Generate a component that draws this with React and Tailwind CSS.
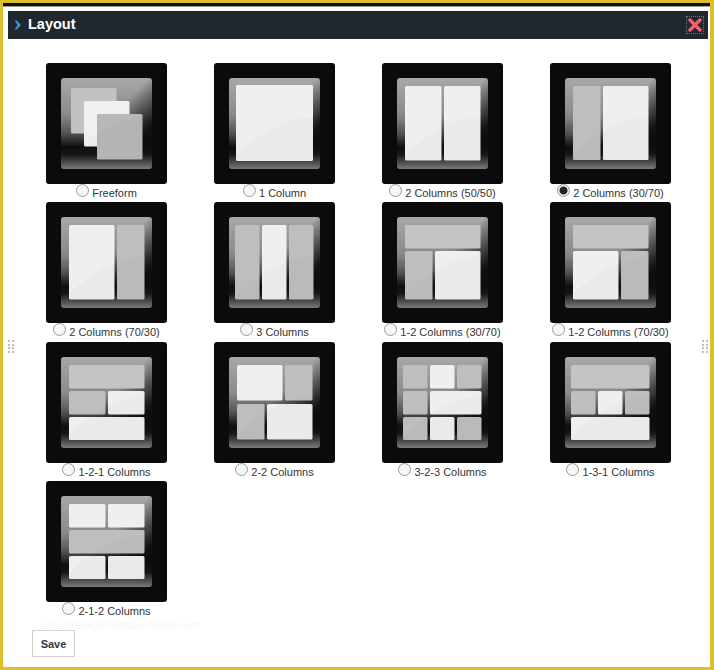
import React, { useId } from 'react';

const L = '#efefef';
const G = '#bebebe';
const T = '#c4c4c4';

// blocks are [x, y, w, h, fill] inside a 121x121 tile
const LAYOUTS = [
  { label: 'Freeform', blocks: [[25, 25, 45.5, 45.5, '#c2c2c2'], [38, 38, 45.5, 45.5, '#f0f0f0'], [51, 51, 45.5, 45.5, '#b8b8b8']] },
  { label: '1 Column', blocks: [[22, 22, 77, 76, L]] },
  { label: '2 Columns (50/50)', blocks: [[23, 23, 36.5, 74.5, L], [62, 23, 36.5, 74.5, L]] },
  { label: '2 Columns (30/70)', checked: true, blocks: [[23, 23, 27.5, 74, G], [53, 23, 45.5, 74, L]] },
  { label: '2 Columns (70/30)', blocks: [[23, 23, 45.5, 74.5, L], [71, 23, 27.5, 74.5, G]] },
  { label: '3 Columns', blocks: [[21, 23, 24.5, 74.5, G], [48, 23, 24.5, 74.5, L], [75, 23, 24.5, 74.5, G]] },
  { label: '1-2 Columns (30/70)', blocks: [[23, 23, 75.5, 23.5, T], [23, 49, 27.5, 48.5, G], [53, 49, 45.5, 48.5, L]] },
  { label: '1-2 Columns (70/30)', blocks: [[23, 23, 75.5, 23.5, T], [23, 49, 45.5, 48.5, L], [71, 49, 27.5, 48.5, G]] },
  { label: '1-2-1 Columns', blocks: [[23, 23, 75.5, 23.5, T], [23, 49, 36.5, 23.5, G], [62, 49, 36.5, 23.5, L], [23, 75, 75.5, 23, L]] },
  { label: '2-2 Columns', blocks: [[23, 23, 45.5, 35.5, L], [71, 23, 27.5, 35.5, G], [23, 62, 27.5, 35.5, G], [53, 62, 45.5, 35.5, L]] },
  { label: '3-2-3 Columns', blocks: [[21, 23, 24.5, 23.5, G], [48, 23, 24.5, 23.5, L], [75, 23, 24.5, 23.5, G], [21, 49, 24.5, 23.5, G], [48, 49, 51.5, 23.5, L], [21, 75, 24.5, 23, G], [48, 75, 24.5, 23, L], [75, 75, 24.5, 23, G]] },
  { label: '1-3-1 Columns', blocks: [[21, 23, 78.5, 23.5, T], [21, 49, 24.5, 23.5, G], [48, 49, 24.5, 23.5, L], [75, 49, 24.5, 23.5, G], [21, 75, 78.5, 23, L]] },
  { label: '2-1-2 Columns', blocks: [[23, 23, 36.5, 23.5, L], [62, 23, 36.5, 23.5, L], [23, 49, 75.5, 23.5, G], [23, 75, 36.5, 23, L], [62, 75, 36.5, 23, L]] },
];

function LayoutIcon({ blocks }) {
  const id = useId();
  return (
    <svg width="121" height="121" viewBox="0 0 121 121" className="block">
      <defs>
        <linearGradient id={`${id}p`} x1="0" y1="0" x2="0" y2="1">
          <stop offset="0" stopColor="#a8a8a8" />
          <stop offset="0.4" stopColor="#8a8a8a" />
          <stop offset="0.6" stopColor="#565656" />
          <stop offset="0.76" stopColor="#0e0e0e" />
          <stop offset="0.84" stopColor="#161616" />
          <stop offset="1" stopColor="#7a7a7a" />
        </linearGradient>
        <linearGradient id={`${id}d`} gradientUnits="userSpaceOnUse" x1="60" y1="30" x2="100" y2="70">
          <stop offset="0.35" stopColor="#0c0c0c" stopOpacity="0" />
          <stop offset="1" stopColor="#0c0c0c" stopOpacity="0.95" />
        </linearGradient>
        <clipPath id={`${id}c`}>
          {blocks.map((b, i) => (
            <rect key={i} x={b[0]} y={b[1]} width={b[2]} height={b[3]} rx="1.5" />
          ))}
        </clipPath>
      </defs>
      <rect width="121" height="121" rx="3" fill="#0b0b0b" />
      <rect x="15" y="15" width="91" height="91" rx="3" fill={`url(#${id}p)`} />
      <rect x="15" y="15" width="91" height="69" rx="3" fill={`url(#${id}d)`} />
      {blocks.map((b, i) => (
        <rect key={i} x={b[0]} y={b[1]} width={b[2]} height={b[3]} rx="1.5" fill={b[4]} />
      ))}
      <path d="M15 100 C40 72 75 52 106 54 L106 100 Z" fill="#000" opacity="0.02" clipPath={`url(#${id}c)`} />
    </svg>
  );
}

function LayoutOption({ item }) {
  return (
    <label className="block w-[121px]">
      <LayoutIcon blocks={item.blocks} />
      <span className="flex justify-center whitespace-nowrap text-[11px] leading-[14px] text-[#333]">
        <span className="flex items-start">
          <input
            type="radio"
            name="layout"
            defaultChecked={item.checked}
            className="appearance-none w-[13px] h-[13px] mr-[3px] rounded-full border border-[#999] bg-[#f6f6f6] checked:bg-[radial-gradient(circle,#222_0,#222_3.5px,#f0f0f0_4.5px)]"
          />
          <span className="mt-[2px]">{item.label}</span>
        </span>
      </span>
    </label>
  );
}

function Grip({ className }) {
  return (
    <div className={`absolute top-[337px] grid grid-cols-2 gap-x-[2px] gap-y-[1.5px] ${className}`}>
      {Array.from({ length: 8 }).map((_, i) => (
        <span key={i} className="w-[2px] h-[2px] bg-[#bdbdbd]" />
      ))}
    </div>
  );
}

export default function App() {
  return (
    <div className="relative h-[670px] w-[714px] overflow-hidden bg-white border-t-[3px] border-b-[3px] border-l-[3px] border-r-[4px] border-[#dcbf2c] font-['Liberation_Sans',Arial,sans-serif]">
      <div className="h-[3px] bg-[#111]" />
      <div className="h-[1px] bg-[#9a9f9f]" />

      <div className="mt-[4px] ml-[5px] mr-[2px] h-[28px] flex items-center justify-between bg-[#20282d]">
        <div className="flex items-center">
          <svg width="8" height="10" viewBox="0 0 8 10" className="ml-[6px] mr-[6px] mb-[1px]">
            <path d="M0.5 0.5 H3 L7 5 L3 9.5 H0.5 L3.5 5 Z" fill="#3d8fc4" />
          </svg>
          <h1 className="mb-[1px] text-[14.5px] leading-none font-bold text-white">Layout</h1>
        </div>
        <button className="w-[18px] h-[18px] mr-[4px] flex items-center justify-center border border-dotted border-[#5a7ba0]">
          <svg width="14" height="14" viewBox="0 0 14 14">
            <path d="M2 2 L12 12 M12 2 L2 12" stroke="#f7606a" strokeWidth="3.4" strokeLinecap="round" />
          </svg>
        </button>
      </div>

      <div className="mt-[24px] ml-[43px] grid grid-cols-[repeat(4,121px)] gap-x-[47px] auto-rows-[139.33px]">
        {LAYOUTS.map(item => (
          <LayoutOption key={item.label} item={item} />
        ))}
      </div>

      <div className="ml-[37px] h-[10px] text-[10.6px] leading-[10px] text-[#f6f6f6]">www.heritagechristiancollege.com</div>

      <button className="ml-[29px] w-[43px] h-[27px] border border-[#cfcfcf] bg-white text-[11px] font-bold text-[#2f3a45]">Save</button>

      <Grip className="left-[5px]" />
      <Grip className="right-[2px]" />
    </div>
  );
}
